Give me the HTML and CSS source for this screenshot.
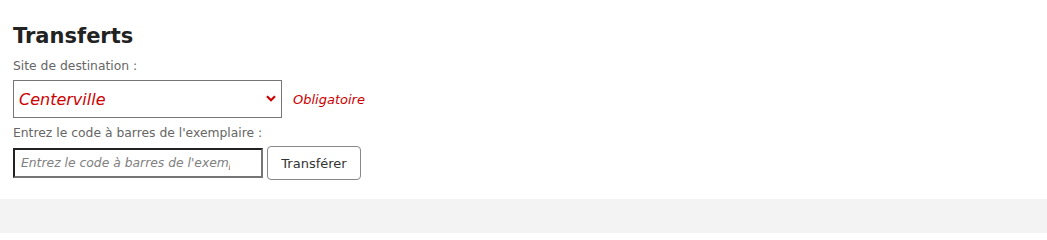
FILE: index.html
```html
<!DOCTYPE html>
<html lang="fr">
<head>
<meta charset="utf-8">
<title>Transferts</title>
<link rel="stylesheet" href="styles.css">
</head>
<body>
<main class="page">
  <h1 class="title">Transferts</h1>
  <form class="form">
    <label class="label label-first" for="site">Site de destination :</label>
    <div class="row row-select">
      <div class="select-wrap">
        <select id="site" class="select">
          <option>Centerville</option>
        </select>
        <svg class="chevron" width="10" height="7" viewBox="0 0 10 7" aria-hidden="true"><path d="M1 1.2 L5 5.2 L9 1.2" fill="none" stroke="#cc0000" stroke-width="2.2"/></svg>
      </div>
      <span class="required">Obligatoire</span>
    </div>
    <label class="label" for="barcode">Entrez le code à barres de l'exemplaire :</label>
    <div class="row row-input">
      <input id="barcode" class="input" type="text" placeholder="Entrez le code à barres de l'exemplaire">
      <button type="button" class="btn">Transférer</button>
    </div>
  </form>
</main>
<footer class="footer"></footer>
</body>
</html>
```
FILE: styles.css
```css
html, body {
  margin: 0;
  padding: 0;
  background: #fff;
  font-family: "DejaVu Sans", sans-serif;
}
.page {
  padding: 21px 13px 0 13px;
  height: 181px;
  box-sizing: border-box;
}
.title {
  margin: 0;
  font-size: 21px;
  font-weight: bold;
  color: #222;
  line-height: 30px;
}
.form {
  display: flex;
  flex-direction: column;
  align-items: flex-start;
}
.label {
  font-size: 12.35px;
  color: #666;
  line-height: 16px;
  margin-top: 7px;
  margin-bottom: 5px;
}
.label-first {
  margin-bottom: 6px;
}
.row {
  display: flex;
  align-items: center;
}
.select-wrap {
  position: relative;
}
.select {
  appearance: none;
  -webkit-appearance: none;
  width: 269px;
  height: 38px;
  box-sizing: border-box;
  border: 1px solid #767676;
  border-radius: 0;
  background: #fff;
  padding: 0 24px 0 5px;
  font-family: "DejaVu Sans", sans-serif;
  font-style: italic;
  font-size: 16px;
  color: #cc0000;
}
.chevron {
  position: absolute;
  right: 6px;
  top: 15px;
  pointer-events: none;
}
.required {
  margin-left: 11px;
  font-size: 13px;
  font-style: italic;
  color: #cc0000;
}
.row-input {
  gap: 4px;
}
.input {
  width: 250px;
  height: 30px;
  box-sizing: border-box;
  border: 2px solid #767676;
  border-color: #222 #767676 #767676 #222;
  padding: 0 31px 0 6px;
  font-family: "DejaVu Sans", sans-serif;
  font-size: 12.35px;
}
.input::placeholder {
  color: #808080;
  font-style: italic;
}
.btn {
  width: 94px;
  height: 34px;
  box-sizing: border-box;
  background: #fff;
  border: 1px solid #888;
  border-radius: 4px;
  font-family: "DejaVu Sans", sans-serif;
  font-size: 13px;
  color: #333;
  padding: 0;
}
.footer {
  height: 34px;
  background: #f3f3f3;
  margin-top: 18px;
}
```
